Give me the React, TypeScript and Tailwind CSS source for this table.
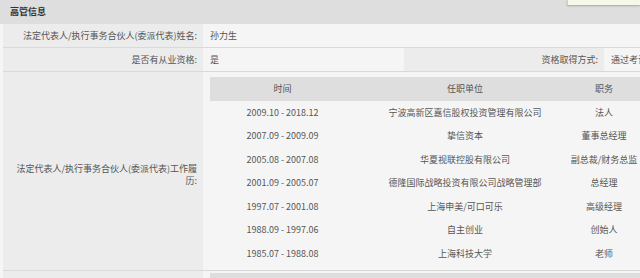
import React from "react";

type Job = {
  period: string;
  company: string;
  title: string;
};

const jobs: Job[] = [
  { period: "2009.10 - 2018.12", company: "宁波高新区嘉信股权投资管理有限公司", title: "法人" },
  { period: "2007.09 - 2009.09", company: "挚信资本", title: "董事总经理" },
  { period: "2005.08 - 2007.08", company: "华夏视联控股有限公司", title: "副总裁/财务总监" },
  { period: "2001.09 - 2005.07", company: "德隆国际战略投资有限公司战略管理部", title: "总经理" },
  { period: "1997.07 - 2001.08", company: "上海申美/可口可乐", title: "高级经理" },
  { period: "1988.09 - 1997.06", company: "自主创业", title: "创始人" },
  { period: "1985.07 - 1988.08", company: "上海科技大学", title: "老师" },
];

const font = "font-['Microsoft_YaHei','Noto_Sans_CJK_SC',sans-serif]";

function Label({ children, className = "" }: { children: React.ReactNode; className?: string }) {
  return (
    <div className={`w-[200px] shrink-0 bg-[#ececec] pr-[6px] pl-[8px] text-right flex items-center justify-end ${className}`}>
      {children}
    </div>
  );
}

function History() {
  return (
    <div className="w-[440px] text-center">
      <div className="grid grid-cols-[145px_220px_58px_1fr] h-[24px] items-center bg-[#dedede]">
        <div>时间</div>
        <div>任职单位</div>
        <div>职务</div>
        <div />
      </div>
      {jobs.map((j) => (
        <div key={j.period} className="grid grid-cols-[145px_220px_58px_1fr] h-[23.5px] items-center">
          <div>{j.period}</div>
          <div>{j.company}</div>
          <div className="whitespace-nowrap flex justify-center">{j.title}</div>
          <div />
        </div>
      ))}
    </div>
  );
}

export default function App() {
  return (
    <div className={`relative w-[640px] h-[278px] overflow-hidden bg-[#f5f5f5] text-[9px] leading-[12px] text-[#555] ${font}`}>
      {/* section title */}
      <div className="h-[24px] bg-[#dedede] flex items-center pl-[10px] font-bold text-[#333]">高管信息</div>

      {/* popup peeking in at the top right */}
      <div className="absolute top-0 right-0 w-[73px] h-[5px] bg-[#f8f8e9] border-l border-[#cfcfcf] shadow-[0_1px_2px_rgba(0,0,0,0.25)]" />

      <div className="pl-[3px]">
        <div className="flex h-[24px] border-b border-[#d9d9d9]">
          <Label>法定代表人/执行事务合伙人(委派代表)姓名:</Label>
          <div className="flex items-center pl-[7px]">孙力生</div>
        </div>

        <div className="flex h-[24px] border-b border-[#d9d9d9]">
          <Label>是否有从业资格:</Label>
          <div className="w-[201px] shrink-0 flex items-center pl-[7px]">是</div>
          <Label>资格取得方式:</Label>
          <div className="flex items-center pl-[7px] whitespace-nowrap">通过考试</div>
        </div>

        <div className="flex h-[199px] border-b border-[#d9d9d9]">
          <Label className="pt-[8px]">
            <span>
              法定代表人/执行事务合伙人(委派代表)工作履
              <br />
              历:
            </span>
          </Label>
          <div className="pl-[7px] pt-[5px]">
            <History />
          </div>
        </div>

        <div className="flex h-[20px]">
          <Label />
          <div className="pl-[7px] pt-[2px]">
            <div className="w-[440px] h-[20px] bg-[#dedede]" />
          </div>
        </div>
      </div>
    </div>
  );
}
